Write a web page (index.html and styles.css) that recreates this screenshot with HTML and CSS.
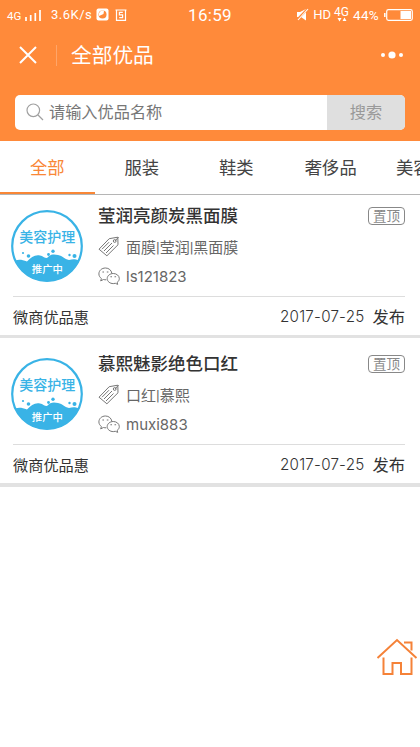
FILE: index.html
```html
<!DOCTYPE html>
<html lang="zh-CN">
<head>
<meta charset="utf-8">
<title>全部优品</title>
<link rel="stylesheet" href="styles.css">
</head>
<body>
<svg class="defs" aria-hidden="true">
  <symbol id="tag" viewBox="0 0 22 22">
    <path d="M1 13.2 11.2 2.7 19.8 1.2 20 8.8 8.9 19.8Z"/>
    <circle cx="16.7" cy="5" r="1.4"/>
    <path d="m17 5 3.6-4M4 13.2l7-7M6 15l8-8M8 17l7.5-7.5"/>
  </symbol>
  <symbol id="wechat" viewBox="0 0 22 18">
    <path d="M13.8 6.2C13.4 3.3 10.8 1 7.5 1 3.7 1 .9 3.6.9 6.9c0 2 1 3.5 2.5 4.6l-.7 2.4 2.8-1.4c.9.2 1.8.4 2.8.3"/>
    <path d="M21.3 11.5c0-2.8-2.8-5-6-5-3.4 0-6.1 2.3-6.1 5.1s2.7 5 6.1 5c.7 0 1.4-.1 2-.3l2.4 1.1-.5-2c1.300-.9 2.100-2.300 2.100-3.900Z"/>
    <path d="M5.2 4.5v1M9.6 4.5v1M13.2 9.3v1M17.3 9.3v1" stroke-width="1.6"/>
  </symbol>
  <symbol id="avatar" viewBox="0 0 72 72">
    <circle class="disc" cx="36" cy="36" r="34.8"/>
    <path class="wave" d="M4 50.5c4-1.500 7-1 12 1C20 47 24 44.500 29 45.500c3 .5 4 2.500 7 2.500 3-4 7-4 11-3 5 1 6 4 11 5 4-1 6-1 10 .5A35 35 0 0 1 4 50.500Z"/>
    <g class="wave"><circle cx="12" cy="43" r="1.1"/><circle cx="17.5" cy="46" r="1.8"/><circle cx="37.5" cy="44.500" r="1.4"/><circle cx="42" cy="41.2" r="1.7"/><circle cx="58.500" cy="45" r="1.2"/><circle cx="63.5" cy="46" r="2"/></g>
    <text class="av-main" x="36.3" y="31.5" text-anchor="middle">美容护理</text>
    <text class="av-sub" x="36.3" y="62.5" text-anchor="middle">推广中</text>
  </symbol>
</svg>

<header class="header">
  <div class="status">
    <div class="status-left">
      <span class="net">4G</span>
      <svg class="signal" width="17" height="12" viewBox="0 0 17 12"><path d="M1 8v4M5.7 6v6M10.3 4v8M15 1v11"/></svg>
      <span class="speed">3.6K/s</span>
      <svg class="app1" width="13" height="13" viewBox="0 0 13 13"><rect x=".5" y=".5" width="12" height="12" rx="2" fill="#fff"/><circle cx="6.5" cy="6.5" r="4" fill="#ff8a3a"/><path d="M3 8a4 4 0 0 1 5-5.200L7.500 6Z" fill="#fff"/></svg>
      <svg class="app2" width="12" height="12" viewBox="0 0 12 12"><path d="M.5 1h11M1.5 1v10.3h9V1M7.8 3.4H4.4v2.5h3.2v2.8H4.2" fill="none" stroke="#fff" stroke-width="1.2"/></svg>
    </div>
    <span class="clock">16:59</span>
    <div class="status-right">
      <svg width="13" height="13" viewBox="0 0 13 13"><path d="M1 4h3l6-3v11.5L5 9H1Z" fill="#fff"/><path d="M1 12 11.5 1" stroke="#ff8a3a" stroke-width="2.5"/><path d="M2 12 12 1" stroke="#fff" stroke-width="1.1"/></svg>
      <span class="hd">HD</span>
      <span class="lte">4G<svg width="10" height="5" viewBox="0 0 10 5"><path d="M.5 1h4l-2 3.5ZM5.5 4h4l-2-3.5Z" fill="#fff"/></svg></span>
      <span class="percent">44%</span>
      <svg class="battery" width="29" height="12" viewBox="0 0 29 12"><rect x="2.7" y=".7" width="25.6" height="10.6" rx="1.8" fill="none" stroke="#fff" stroke-width="1.2"/><path d="M.8 4v4" stroke="#fff" stroke-width="1.5"/><rect x="16.5" y="2" width="10.5" height="8" fill="#fff"/></svg>
    </div>
  </div>
  <div class="titlebar">
    <svg class="close" width="18" height="18" viewBox="0 0 18 18"><path d="m1 1 16 16M17 1 1 17"/></svg>
    <span class="sep"></span>
    <h1>全部优品</h1>
    <svg class="more" width="22" height="8" viewBox="0 0 22 8"><circle cx="2" cy="4" r="2"/><circle cx="11" cy="4" r="3.6"/><circle cx="20" cy="4" r="2"/></svg>
  </div>
  <div class="search">
    <svg width="18" height="18" viewBox="0 0 18 18"><circle cx="7.3" cy="7.3" r="6.3"/><path d="m12 12 5 5"/></svg>
    <span class="placeholder">请输入优品名称</span>
    <button>搜索</button>
  </div>
</header>

<nav class="tabs">
  <a class="tab active">全部</a><a class="tab">服装</a><a class="tab">鞋类</a><a class="tab">奢侈品</a><a class="tab last">美容</a>
</nav>

<main>
  <article class="card">
    <div class="body">
      <svg class="avatar"><use href="#avatar"/></svg>
      <div class="info">
        <div class="head"><h2>莹润亮颜炭黑面膜</h2><span class="pin">置顶</span></div>
        <div class="row tags"><svg class="tag"><use href="#tag"/></svg><span>面膜|莹润|黑面膜</span></div>
        <div class="row id"><svg class="wechat"><use href="#wechat"/></svg><span>ls121823</span></div>
      </div>
    </div>
    <footer><span class="shop">微商优品惠</span><time>2017-07-25</time><span class="pub">发布</span></footer>
  </article>
  <article class="card second">
    <div class="body">
      <svg class="avatar"><use href="#avatar"/></svg>
      <div class="info">
        <div class="head"><h2>慕熙魅影绝色口红</h2><span class="pin">置顶</span></div>
        <div class="row tags"><svg class="tag"><use href="#tag"/></svg><span>口红|慕熙</span></div>
        <div class="row id"><svg class="wechat"><use href="#wechat"/></svg><span>muxi883</span></div>
      </div>
    </div>
    <footer><span class="shop">微商优品惠</span><time>2017-07-25</time><span class="pub">发布</span></footer>
  </article>
</main>

<svg class="home" width="42" height="40" viewBox="0 0 42 40"><path d="M1.500 21 21 3 40.500 21M28 5.500h7.500v8M7.500 20.500V37H16.500V26H25V37H35.500V20.500"/></svg>
</body>
</html>
```
FILE: styles.css
```css
* { box-sizing: border-box; }
body {
  margin: 0;
  height: 747px;
  overflow: hidden;
  background: #fff;
  color: #333;
  font-family: Inter, "Noto Sans CJK SC", sans-serif;
}
h1, h2 { margin: 0; font-weight: 400; }
.defs { display: none; }

.header { height: 141px; background: #ff8a3a; color: #fff; }
.status {
  height: 28px;
  padding: 0 7px;
  display: grid;
  grid-template-columns: 1fr auto 1fr;
  align-items: center;
  font-family: Roboto, sans-serif;
  line-height: 14px;
}
.status-left, .status-right { display: flex; align-items: center; }
.status-right { justify-content: flex-end; }
.net { font-size: 11.5px; width: 15px; padding-top: 2px; }
.signal { margin-left: 3px; fill: none; stroke: #fff; stroke-width: 1.7px; }
.speed { font-size: 13px; letter-spacing: .5px; width: 42px; margin-left: 9px; white-space: nowrap; }
.app1 { margin-left: 3px; }
.app2 { margin-left: 6px; }
.clock { font-size: 17px; letter-spacing: .3px; line-height: 28px; padding-top: 1px; }
.hd { font-size: 13px; margin-left: 4px; }
.lte {
  display: flex;
  flex-direction: column;
  align-items: center;
  font-size: 12px;
  line-height: 10px;
  margin-left: 3px;
}
.percent { font-size: 13.5px; letter-spacing: .3px; margin: 0 5px 0 4px; }

.titlebar { height: 54px; display: flex; align-items: center; padding: 0 17px 0 19px; }
.close { fill: none; stroke: #fff; stroke-width: 2; }
.sep { width: 1px; height: 21px; margin: 0 14px 0 19px; background: #ffa569; }
h1 { font-size: 20.7px; line-height: 28px; margin-top: 2px; }
.more { margin-left: auto; fill: #fff; }

.search {
  display: flex;
  align-items: center;
  height: 35px;
  margin: 12.5px 15px 0;
  padding-left: 11px;
  background: #fff;
  border-radius: 5px;
  overflow: hidden;
}
.search svg { fill: none; stroke: #a0a0a0; stroke-width: 1.2px; }
.placeholder { flex: 1; margin: -2px 0 0 5px; font-size: 16.2px; color: #777; }
.search button {
  width: 78px;
  height: 35px;
  border: 0;
  padding: 0 0 2px;
  background: #dfdfdf;
  color: #999;
  font: inherit;
  font-size: 16.2px;
}

.tabs {
  display: flex;
  height: 54px;
  border-bottom: 1px solid #b5b5b5;
  overflow: hidden;
}
.tab {
  flex: 0 0 94.5px;
  height: 53px;
  line-height: 53px;
  text-align: center;
  font-size: 17.3px;
  color: #444;
}
.tab.active { color: #f98736; border-bottom: 2px solid #f98736; }
.tab.last { text-align: left; padding-left: 18px; }

.card { height: 143px; padding: 0 15px 0 11px; border-bottom: 3px solid #e2e2e2; }
.card.second { height: 149px; padding-top: 5px; border-bottom-width: 4px; }
.body { display: flex; height: 101px; padding-top: 8px; }
.avatar { width: 72px; height: 72px; margin-top: 7px; flex: none; }
.disc { fill: #fff; stroke: #39b3e6; stroke-width: 2.2px; }
.wave { fill: #39b3e6; }
.av-main { font-size: 14px; font-weight: 500; fill: #39b3e6; }
.av-sub { font-size: 10.3px; font-weight: 500; fill: #fff; }
.info { flex: 1; margin-left: 15px; }
.head { display: flex; justify-content: space-between; align-items: center; height: 26px; }
h2 { font-size: 17.5px; line-height: 26px; font-weight: 500; color: #333; }
.pin {
  width: 37px;
  height: 18px;
  margin-bottom: 1px;
  line-height: 16px;
  border: 1px solid #888;
  border-radius: 4px;
  text-align: center;
  font-size: 13.5px;
  color: #888;
}
.row { display: flex; align-items: center; font-size: 15px; color: #666; }
.tags { height: 36px; }
.tags span { margin-top: -2px; font-family: Roboto, "Noto Sans CJK SC", sans-serif; }
.id { height: 22px; }
.row span { margin-left: 6px; }
.row svg { fill: none; stroke: #777; stroke-width: 1; }
.tag { width: 22px; height: 22px; }
.wechat { width: 22px; height: 18px; }
.card footer {
  display: flex;
  align-items: center;
  height: 40px;
  margin-left: 2px;
  padding-bottom: 1px;
  border-top: 1px solid #ddd;
  font-size: 15.2px;
}
.card footer time { margin-left: auto; padding-top: 1px; font-size: 15.2px; font-weight: 350; letter-spacing: .2px; }
.pub { margin-left: 8px; font-size: 16.3px; }

.home {
  position: fixed;
  right: 2px;
  bottom: 70px;
  fill: none;
  stroke: #f58238;
  stroke-width: 2;
}
```
